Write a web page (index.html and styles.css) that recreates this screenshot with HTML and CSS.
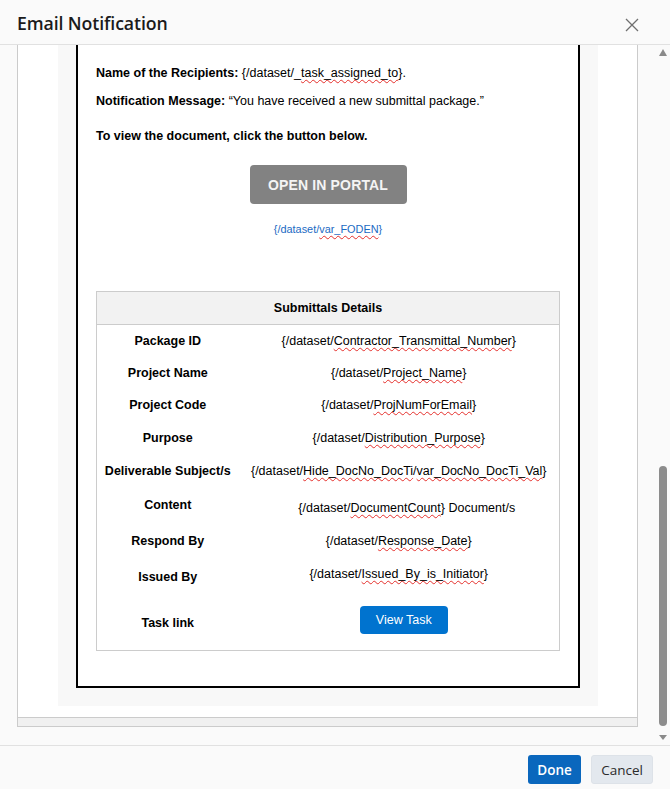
FILE: index.html
```html
<!DOCTYPE html>
<html lang="en">
<head>
<meta charset="utf-8">
<title>Email Notification</title>
<link rel="stylesheet" href="styles.css">
</head>
<body>
<div class="modal">
  <header class="modal-header">
    <h1 class="modal-title">Email Notification</h1>
    <button class="close-btn" aria-label="Close">
      <svg width="14" height="14" viewBox="0 0 14 14"><path d="M1 1L13 13M13 1L1 13" stroke="#6f6f6f" stroke-width="1.3" fill="none"/></svg>
    </button>
  </header>
  <div class="modal-body">
    <div class="frame">
      <div class="frame-view">
        <div class="canvas">
          <div class="email">
            <p class="line l1"><b>Name of the Recipients:</b> {/dataset/_<span class="sp">task_assigned_to</span>}.</p>
            <p class="line l2"><b>Notification Message:</b> “You have received a new submittal package.”</p>
            <p class="line l3"><b>To view the document, click the button below.</b></p>
            <div class="portal-row"><a class="portal-btn">OPEN IN PORTAL</a></div>
            <p class="var-link">{/dataset/<span class="sp">var_FODEN</span>}</p>
            <table class="details">
              <colgroup><col class="c1"><col class="c2"></colgroup>
              <thead><tr><th colspan="2">Submittals Details</th></tr></thead>
              <tbody>
                <tr class="r1"><td class="lbl">Package ID</td><td class="val">{/dataset/<span class="sp">Contractor_Transmittal_Number</span>}</td></tr>
                <tr class="r2"><td class="lbl">Project Name</td><td class="val">{/dataset/<span class="sp">Project_Name</span>}</td></tr>
                <tr class="r3"><td class="lbl">Project Code</td><td class="val">{/dataset/<span class="sp">ProjNumForEmail</span>}</td></tr>
                <tr class="r4"><td class="lbl">Purpose</td><td class="val">{/dataset/<span class="sp">Distribution_Purpose</span>}</td></tr>
                <tr class="r5"><td class="lbl">Deliverable Subject/s</td><td class="val">{/dataset/<span class="sp">Hide_DocNo_DocTi</span>/<span class="sp">var_DocNo_DocTi_Val</span>}</td></tr>
                <tr class="r6"><td class="lbl">Content</td><td class="val low">{/dataset/<span class="sp">DocumentCount</span>} Document/s</td></tr>
                <tr class="r7"><td class="lbl">Respond By</td><td class="val">{/dataset/<span class="sp">Response_Date</span>}</td></tr>
                <tr class="r8"><td class="lbl low-s">Issued By</td><td class="val high">{/dataset/<span class="sp">Issued_By_is_Initiator</span>}</td></tr>
                <tr class="r9"><td class="lbl low-t">Task link</td><td class="val"><a class="task-btn">View Task</a></td></tr>
              </tbody>
            </table>
          </div>
        </div>
      </div>
      <div class="hscroll"></div>
    </div>
    <div class="vscroll">
      <span class="arrow-up"></span>
      <span class="thumb"></span>
      <span class="arrow-down"></span>
    </div>
  </div>
  <footer class="modal-footer">
    <button class="btn btn-primary">Done</button>
    <button class="btn btn-secondary">Cancel</button>
  </footer>
</div>
</body>
</html>
```

FILE: styles.css
```css
* { box-sizing: border-box; }
html, body { margin: 0; padding: 0; }
body {
  width: 670px;
  height: 789px;
  background: #fafafa;
  font-family: "Open Sans", "Noto Sans", sans-serif;
  overflow: hidden;
}
.modal {
  width: 670px;
  height: 789px;
  display: flex;
  flex-direction: column;
  background: #fafafa;
}
.modal-header {
  height: 45px;
  border-bottom: 1px solid #e1e1e1;
  display: flex;
  align-items: center;
  justify-content: space-between;
  padding: 0 31px 0 17px;
}
.modal-title {
  margin: 0;
  font-size: 17.7px;
  font-weight: 600;
  color: #1b1b1b;
  letter-spacing: -0.1px;
  padding-top: 1px;
}
.close-btn {
  border: 0;
  background: transparent;
  padding: 0;
  width: 14px;
  height: 14px;
  margin-top: 6px;
  display: flex;
}
.modal-body {
  height: 700px;
  display: flex;
  padding-left: 17px;
}
.frame {
  width: 621px;
  height: 682px;
  border: 1px solid #cbcbcb;
  border-top: 0;
  display: flex;
  flex-direction: column;
  background: #fff;
}
.frame-view {
  flex: 1;
  overflow: hidden;
}
.hscroll {
  height: 9px;
  border-top: 1px solid #cbcbcb;
  background: #f0f0f0;
}
.canvas {
  width: 540px;
  margin-left: 40px;
  background: #f8f8f8;
  padding: 0 18px 18px;
}
.email {
  background: #fff;
  border: 2px solid #000;
  border-top: 0;
  padding: 0 18px 35px;
  font-family: "Liberation Sans", Arial, sans-serif;
  font-size: 12.5px;
  line-height: 16px;
  color: #000;
}
.line { margin: 0; }
.l1 { padding-top: 20px; }
.l2 { margin-top: 12px; }
.l3 { margin-top: 19px; }
.sp {
  text-decoration: underline wavy #e5302c;
  text-decoration-thickness: 1px;
  text-underline-offset: 2px;
  text-decoration-skip-ink: none;
}
.portal-row {
  margin-top: 21px;
  display: flex;
  justify-content: center;
}
.portal-btn {
  width: 157px;
  height: 39px;
  background: #828282;
  border-radius: 4px;
  color: #f4f4f4;
  font-weight: bold;
  font-size: 14px;
  letter-spacing: 0.15px;
  display: flex;
  align-items: center;
  justify-content: center;
}
.var-link {
  margin: 18px 0 0;
  text-align: center;
  font-size: 10.9px;
  line-height: 14px;
  color: #1b6ac3;
}
.details {
  margin-top: 55px;
  width: 464px;
  border-collapse: collapse;
  table-layout: fixed;
  border: 1px solid #cccccc;
}
.c1 { width: 142px; }
.details th {
  height: 33px;
  padding: 0;
  background: #f2f2f2;
  border-bottom: 1px solid #cccccc;
  font-weight: bold;
  text-align: center;
  vertical-align: middle;
}
.details td {
  padding: 0;
  text-align: center;
  vertical-align: middle;
  white-space: nowrap;
}
.lbl { font-weight: bold; }
.r1 { height: 32px; }
.r2 { height: 33px; }
.r3 { height: 31px; }
.r4 { height: 35px; }
.r5 { height: 31px; }
.r6 { height: 36px; }
.r7 { height: 36px; }
.r8 { height: 34px; }
.r9 { height: 58px; }
.details td.low { padding-top: 7px; padding-left: 16px; }
.details td.low-s { padding-top: 3px; }
.details td.high { padding-bottom: 3px; }
.details td.low-t { padding-top: 4px; }
.task-btn {
  display: inline-flex;
  align-items: center;
  justify-content: center;
  width: 88px;
  height: 28px;
  margin-left: 10px;
  margin-bottom: 2px;
  border-radius: 4px;
  background: #0073cf;
  color: #fff;
  font-size: 12.5px;
}
.vscroll {
  margin-left: auto;
  width: 14px;
  display: flex;
  flex-direction: column;
  align-items: center;
}
.arrow-up {
  margin-top: 4px;
  width: 0;
  height: 0;
  border-left: 4.5px solid transparent;
  border-right: 4.5px solid transparent;
  border-bottom: 7px solid #8a8a8a;
}
.thumb {
  margin-top: auto;
  width: 8px;
  height: 260px;
  border-radius: 4px;
  background: #8c8c8c;
}
.arrow-down {
  margin-top: 9px;
  margin-bottom: 5px;
  width: 0;
  height: 0;
  border-left: 4px solid transparent;
  border-right: 4px solid transparent;
  border-top: 5px solid #8a8a8a;
}
.modal-footer {
  height: 44px;
  border-top: 1px solid #e1e1e1;
  display: flex;
  justify-content: flex-end;
  align-items: flex-start;
  gap: 10px;
  padding: 9px 17px 0 0;
}
.btn {
  height: 29px;
  border-radius: 3px;
  font-family: "Open Sans", "Noto Sans", sans-serif;
  font-size: 13.5px;
  padding: 0;
  border: 0;
}
.btn-primary {
  width: 53px;
  background: #0a67bd;
  color: #fff;
  font-weight: 600;
}
.btn-secondary {
  width: 62px;
  background: #e3e8ee;
  color: #2b2b2b;
  border: 1px solid #dde2e8;
}
```
